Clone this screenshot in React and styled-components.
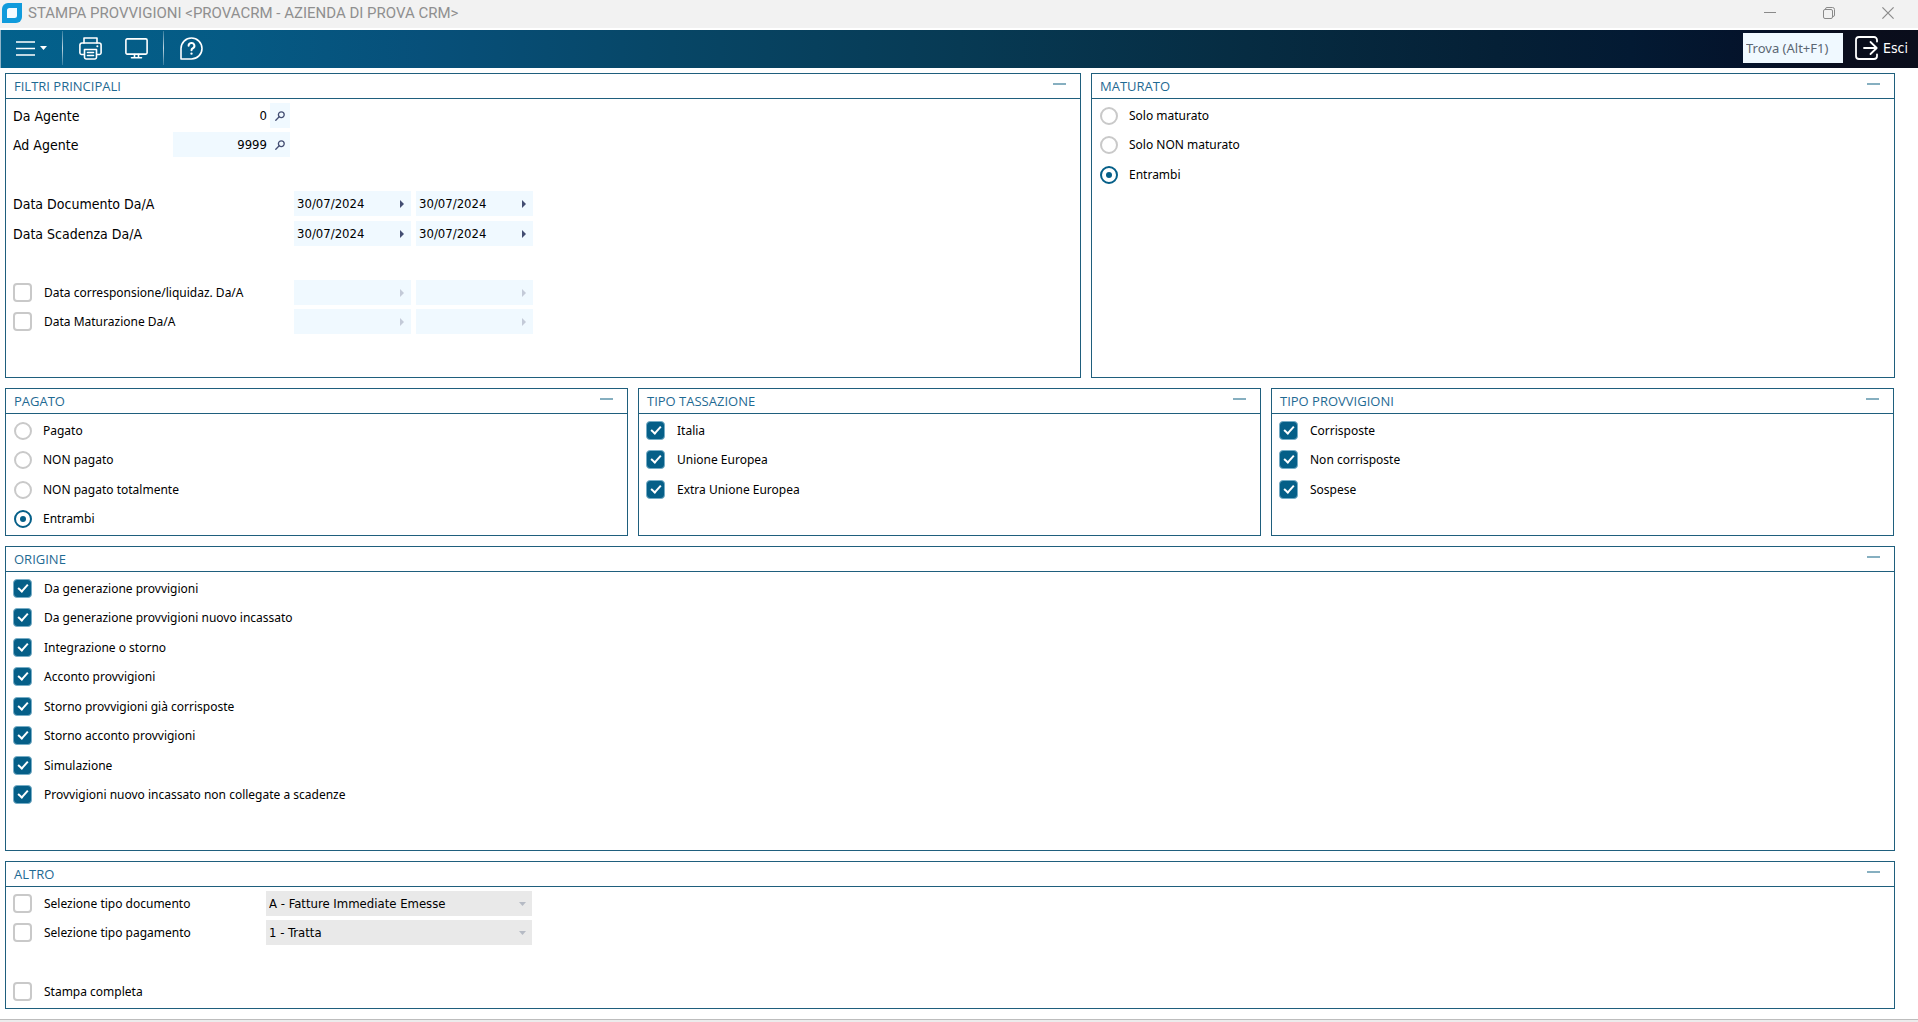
import React, { useId, useState } from 'react';
import styled, { createGlobalStyle } from 'styled-components';

const color = {
  line: '#1f5f7d',
  heading: '#1f6a93',
  accent: '#055f88',
  field: '#f0f9ff',
  glyph: '#434d72',
};

const GlobalStyle = createGlobalStyle`
  *, *::before, *::after { box-sizing: border-box; }
  body {
    margin: 0;
    background: #fff;
    color: #000;
    font: 12px/16px "Noto Sans", sans-serif;
  }
  button, input, select { font: inherit; color: inherit; margin: 0; }
`;

const Window = styled.div`
  display: flex;
  flex-direction: column;
  min-height: 100vh;
`;

/* ---------- title bar ---------- */

const TitleBar = styled.header`
  display: flex;
  align-items: center;
  gap: 6px;
  height: 28px;
  margin-bottom: 2px;
  padding: 0 12px 2px 2px;
  background: #f2f2f2;
  color: #8f8f8f;
`;

const Title = styled.h1`
  flex: 1;
  margin: 0;
  font: 400 15px/20px Roboto, sans-serif;
  white-space: nowrap;
`;

const WindowControls = styled.div`
  display: flex;
  gap: 23px;
`;

const WindowButton = styled.button`
  display: grid;
  place-items: center;
  width: 36px;
  height: 24px;
  padding: 0;
  border: 0;
  background: none;
  color: #8a8a8a;
`;

/* ---------- toolbar ---------- */

const Toolbar = styled.nav`
  display: flex;
  align-items: center;
  height: 38px;
  padding: 0 10px 2px 7px;
  border-left: 1px solid #8fb4c8;
  background: linear-gradient(
    90deg,
    #03618c 0%,
    #055a84 12%,
    #07507a 22%,
    #074666 35%,
    #073a54 50%,
    #062c42 65%,
    #052036 78%,
    #031a33 85%,
    #04132b 91%,
    #0a0e1d 96%,
    #0a0d1b 100%
  );
  color: #fff;
`;

const ToolButton = styled.button`
  display: flex;
  align-items: center;
  justify-content: center;
  gap: 5px;
  width: 46px;
  height: 34px;
  padding: 0;
  border: 0;
  background: none;
`;

const ToolGroup = styled.div`
  display: flex;
  padding: 0 4px;
`;

const Separator = styled.span`
  width: 1px;
  height: 34px;
  margin-left: ${(p) => (p.$wide ? 8 : 0)}px;
  background: linear-gradient(rgba(255, 255, 255, 0.2), rgba(255, 255, 255, 0.75), rgba(255, 255, 255, 0.2));
`;

const SearchBox = styled.input`
  width: 100px;
  height: 30px;
  margin-left: auto;
  padding: 0 3px;
  border: 0;
  border-radius: 0;
  background: ${color.field};
  font-size: 13px;
  &::placeholder { color: #5b6672; opacity: 1; }
`;

const ExitButton = styled.button`
  display: flex;
  align-items: center;
  gap: 4px;
  height: 34px;
  margin-left: 12px;
  padding: 0;
  border: 0;
  background: none;
  font: 14px/20px "DejaVu Sans Condensed", sans-serif;
`;

/* ---------- panels ---------- */

const Main = styled.main`
  display: flex;
  flex-direction: column;
  flex: 1;
  gap: 10px;
  padding: 5px 23px 10px 5px;
`;

const PanelRow = styled.div`
  display: grid;
  grid-template-columns: ${(p) => p.$columns};
  gap: 10px;
  padding-right: ${(p) => (p.$inset ? 1 : 0)}px;
`;

const PanelFrame = styled.section`
  min-height: ${(p) => (p.$tall ? 305 : 148)}px;
  border: 1px solid ${color.line};
  background: #fff;
`;

const PanelHeader = styled.div`
  display: flex;
  justify-content: space-between;
  height: 25px;
  padding: 0 12px 0 8px;
  border-bottom: 1px solid ${color.line};
`;

const PanelTitle = styled.h2`
  margin: 0;
  color: ${color.heading};
  font: 400 13px/25px "Open Sans", sans-serif;
`;

const CollapseButton = styled.button`
  display: grid;
  place-items: center;
  width: 17px;
  height: 20px;
  padding: 0;
  border: 0;
  background: none;
  &::before {
    content: "";
    width: 13px;
    height: 2px;
    background: #86afc0;
  }
`;

const PanelBody = styled.div`
  padding: 4px 7px;
`;

const Row = styled.div`
  display: flex;
  align-items: center;
  height: 25px;
  &:nth-child(odd) { margin-bottom: 4px; }
  &:nth-child(even) { margin-bottom: 5px; }
  &:last-child { margin-bottom: 0; }
`;

const LabelCell = styled.div`
  display: flex;
  flex: none;
  width: ${(p) => p.$width}px;
`;

const FieldLabel = styled.label`
  font: 14px/20px "DejaVu Sans Condensed", sans-serif;
`;

const ChoiceLabel = styled.label`
  display: flex;
  align-items: center;
  gap: ${(p) => p.$gap}px;
`;

const CheckInput = styled.input`
  appearance: none;
  display: grid;
  place-items: center;
  width: 19px;
  height: 19px;
  border: 2px solid #c9c9c9;
  border-radius: 4px;
  background: #fff;
  &:checked {
    border: 1px solid #76adc6;
    background: ${color.accent};
  }
  &:checked::before {
    content: "";
    width: 6px;
    height: 10px;
    margin-top: -3px;
    border: solid #fff;
    border-width: 0 2px 2px 0;
    transform: rotate(42deg);
  }
`;

const RadioInput = styled.input`
  appearance: none;
  display: grid;
  place-items: center;
  width: 18px;
  height: 18px;
  margin-left: 1px;
  border: 2px solid #c9c9c9;
  border-radius: 50%;
  background: #fff;
  &:checked { border-color: ${color.accent}; }
  &:checked::before {
    content: "";
    width: 6px;
    height: 6px;
    border-radius: 50%;
    background: ${color.accent};
  }
`;

const FieldBox = styled.div`
  display: flex;
  width: 117px;
  height: 25px;
  margin-right: 5px;
  background: ${color.field};
`;

const TextInput = styled.input`
  flex: 1;
  min-width: 0;
  height: 25px;
  padding: 0 3px;
  border: 0;
  border-radius: 0;
  outline: 0;
  background: ${(p) => (p.$active ? '#fff' : 'transparent')};
  font: 13px/25px "DejaVu Sans Condensed", sans-serif;
  text-align: ${(p) => p.$align};
`;

const FieldButton = styled.button`
  display: grid;
  place-items: center;
  width: 20px;
  height: 25px;
  padding: 0 0 0 ${(p) => (p.$arrow ? 2 : 0)}px;
  border: 0;
  background: none;
  color: ${color.glyph};
  &:disabled { color: #c3cad8; }
`;

const SelectBox = styled.div`
  display: grid;
  align-items: center;
  width: 266px;
  height: 25px;
  background: #e9e9e9;
  color: #b5bac4;
  > * { grid-area: 1 / 1; }
  > svg { justify-self: end; margin-right: 6px; pointer-events: none; }
`;

const SelectInput = styled.select`
  appearance: none;
  width: 100%;
  height: 25px;
  padding: 0 20px 0 3px;
  border: 0;
  border-radius: 0;
  background: transparent;
  color: #000;
  font: 13px/25px "DejaVu Sans Condensed", sans-serif;
  opacity: 1;
`;

const StatusBar = styled.footer`
  height: 3px;
  border-top: 1px solid #bdbdbd;
  background: #ececec;
`;

/* ---------- drawings ---------- */

const AppLogo = () => (
  <svg width="20" height="20" viewBox="0 0 20 20" aria-hidden="true">
    <path d="M6 0H20V14A6 6 0 0 1 14 20H0V6A6 6 0 0 1 6 0Z" fill="#109bdc" />
    <path d="M7.500 5H15V12.500A2.500 2.500 0 0 1 12.500 15H5V7.500A2.500 2.500 0 0 1 7.500 5Z" fill="#f4fbff" />
  </svg>
);

const MinimizeIcon = () => (
  <svg width="12" height="12" viewBox="0 0 12 12" fill="none" stroke="currentColor">
    <path d="M0 5.500H12" />
  </svg>
);

const RestoreIcon = () => (
  <svg width="12" height="12" viewBox="0 0 12 12" fill="none" stroke="currentColor">
    <rect x="0.500" y="2.500" width="9" height="9" rx="1.500" />
    <path d="M2.500 2.500V2A1.500 1.500 0 0 1 4 .500H9.500A2 2 0 0 1 11.500 2.500V8A1.500 1.500 0 0 1 10 9.500H9.500" />
  </svg>
);

const CloseIcon = () => (
  <svg width="12" height="12" viewBox="0 0 12 12" fill="none" stroke="currentColor" strokeWidth="1.200">
    <path d="M.400 .400L11.600 11.600M11.600 .400L.400 11.600" />
  </svg>
);

const MenuIcon = () => (
  <svg width="19" height="15" viewBox="0 0 19 15" stroke="#fff" strokeWidth="1.600">
    <path d="M0 1H19M0 7.500H19M0 14H19" />
  </svg>
);

const CaretIcon = () => (
  <svg width="7" height="4" viewBox="0 0 7 4" fill="currentColor">
    <path d="M0 0H7L3.500 4Z" />
  </svg>
);

const PrinterIcon = () => (
  <svg width="23" height="23" viewBox="0 0 23 23" fill="none" stroke="#fff" strokeWidth="1.600" strokeLinejoin="round" strokeLinecap="round">
    <path d="M5 6V1H18V6" />
    <path d="M5 17.500H2.500A1.700 1.700 0 0 1 .900 16V8A2 2 0 0 1 2.900 6H20.100A2 2 0 0 1 22.100 8V16A1.700 1.700 0 0 1 20.500 17.500H18" />
    <path d="M5.500 12.500H17.500V20.500A1.600 1.600 0 0 1 16 22H7A1.600 1.600 0 0 1 5.500 20.500Z" />
    <path d="M8.500 15.500H14.500M8.500 18.500H14.500" />
    <path d="M18.300 9.200H18.400" strokeWidth="2" />
  </svg>
);

const MonitorIcon = () => (
  <svg width="23" height="21" viewBox="0 0 23 21" fill="none" stroke="#fff" strokeWidth="1.600" strokeLinejoin="round" strokeLinecap="round">
    <rect x=".900" y=".900" width="21.200" height="15.200" rx="1.300" />
    <path d="M9.500 16.500V19.500M13.500 16.500V19.500M6.500 19.800H16.500" />
  </svg>
);

const HelpIcon = () => (
  <svg width="23" height="23" viewBox="0 0 23 23" fill="none" stroke="#fff" strokeWidth="1.600" strokeLinecap="round" strokeLinejoin="round">
    <path d="M1 22V11.500A10.500 10.500 0 1 1 11.500 22Z" />
    <path d="M8.600 8.800A2.900 2.900 0 1 1 12.600 11.500C11.800 11.900 11.500 12.300 11.500 13.300" strokeWidth="2" />
    <path d="M11.500 16.600V16.700" strokeWidth="2.300" />
  </svg>
);

const ExitIcon = () => (
  <svg width="24" height="24" viewBox="0 0 24 24" fill="none" stroke="#fff" strokeWidth="1.800" strokeLinecap="round" strokeLinejoin="round">
    <path d="M22 5.500V4A3 3 0 0 0 19 1H4A3 3 0 0 0 1 4V20A3 3 0 0 0 4 23H19A3 3 0 0 0 22 20V18.500" />
    <path d="M9 12H21.500M15.500 6L21.700 12L15.500 18" />
  </svg>
);

const LookupIcon = () => (
  <svg width="10" height="10" viewBox="0 0 10 10" fill="none" stroke="currentColor" strokeWidth="1.300" strokeLinecap="round">
    <circle cx="6.300" cy="3.700" r="2.900" />
    <path d="M4.200 5.800L.800 9.200" />
  </svg>
);

const ArrowIcon = () => (
  <svg width="4" height="8" viewBox="0 0 4 8" fill="currentColor">
    <path d="M0 0L4 4L0 8Z" />
  </svg>
);

/* ---------- composed parts ---------- */

function Panel({ title, tall, children }) {
  return (
    <PanelFrame $tall={tall}>
      <PanelHeader>
        <PanelTitle>{title}</PanelTitle>
        <CollapseButton type="button" aria-label={`Riduci ${title}`} />
      </PanelHeader>
      <PanelBody>{children}</PanelBody>
    </PanelFrame>
  );
}

function Check({ label, checked = false }) {
  return (
    <ChoiceLabel $gap={12}>
      <CheckInput type="checkbox" defaultChecked={checked} />
      {label}
    </ChoiceLabel>
  );
}

function CheckList({ items }) {
  return items.map((label) => (
    <Row key={label}>
      <Check label={label} checked />
    </Row>
  ));
}

function RadioList({ name, items, initial }) {
  const [value, setValue] = useState(initial);
  return items.map((label) => (
    <Row key={label}>
      <ChoiceLabel $gap={11}>
        <RadioInput type="radio" name={name} checked={value === label} onChange={() => setValue(label)} />
        {label}
      </ChoiceLabel>
    </Row>
  ));
}

function AgentRow({ label, value, active }) {
  const id = useId();
  return (
    <Row>
      <LabelCell $width={160}>
        <FieldLabel htmlFor={id}>{label}</FieldLabel>
      </LabelCell>
      <FieldBox>
        <TextInput id={id} defaultValue={value} $align="right" $active={active} />
        <FieldButton type="button" aria-label={`Cerca ${label}`}>
          <LookupIcon />
        </FieldButton>
      </FieldBox>
    </Row>
  );
}

function DateField({ id, label, value, disabled }) {
  return (
    <FieldBox>
      <TextInput id={id} aria-label={label} defaultValue={value} disabled={disabled} $align="left" />
      <FieldButton type="button" aria-label={`Calendario ${label}`} disabled={disabled} $arrow>
        <ArrowIcon />
      </FieldButton>
    </FieldBox>
  );
}

function DateRow({ label, value = '', optional }) {
  const id = useId();
  return (
    <Row>
      <LabelCell $width={281}>
        {optional ? <Check label={label} /> : <FieldLabel htmlFor={id}>{label}</FieldLabel>}
      </LabelCell>
      <DateField id={id} label={`${label} inizio`} value={value} disabled={optional} />
      <DateField label={`${label} fine`} value={value} disabled={optional} />
    </Row>
  );
}

function SelectRow({ label, option }) {
  return (
    <Row>
      <LabelCell $width={253}>
        <Check label={label} />
      </LabelCell>
      <SelectBox>
        <SelectInput aria-label={label} disabled>
          <option>{option}</option>
        </SelectInput>
        <CaretIcon />
      </SelectBox>
    </Row>
  );
}

export default function App() {
  return (
    <>
      <GlobalStyle />
      <Window>
        <TitleBar>
          <AppLogo />
          <Title>{'STAMPA PROVVIGIONI <PROVACRM - AZIENDA DI PROVA CRM>'}</Title>
          <WindowControls>
            <WindowButton type="button" aria-label="Riduci a icona"><MinimizeIcon /></WindowButton>
            <WindowButton type="button" aria-label="Ripristina"><RestoreIcon /></WindowButton>
            <WindowButton type="button" aria-label="Chiudi"><CloseIcon /></WindowButton>
          </WindowControls>
        </TitleBar>

        <Toolbar>
          <ToolButton type="button" aria-label="Menu"><MenuIcon /><CaretIcon /></ToolButton>
          <Separator $wide />
          <ToolGroup>
            <ToolButton type="button" aria-label="Stampa"><PrinterIcon /></ToolButton>
            <ToolButton type="button" aria-label="Anteprima"><MonitorIcon /></ToolButton>
          </ToolGroup>
          <Separator />
          <ToolGroup>
            <ToolButton type="button" aria-label="Aiuto"><HelpIcon /></ToolButton>
          </ToolGroup>
          <SearchBox type="text" aria-label="Trova" placeholder="Trova (Alt+F1)" />
          <ExitButton type="button"><ExitIcon />Esci</ExitButton>
        </Toolbar>

        <Main>
          <PanelRow $columns="1076fr 804fr">
            <Panel title="FILTRI PRINCIPALI" tall>
              <AgentRow label="Da Agente" value="0" active />
              <AgentRow label="Ad Agente" value="9999" />
              <Row />
              <DateRow label="Data Documento Da/A" value="30/07/2024" />
              <DateRow label="Data Scadenza Da/A" value="30/07/2024" />
              <Row />
              <DateRow label="Data corresponsione/liquidaz. Da/A" optional />
              <DateRow label="Data Maturazione Da/A" optional />
            </Panel>
            <Panel title="MATURATO" tall>
              <RadioList name="maturato" initial="Entrambi" items={['Solo maturato', 'Solo NON maturato', 'Entrambi']} />
            </Panel>
          </PanelRow>

          <PanelRow $columns="repeat(3, 1fr)" $inset>
            <Panel title="PAGATO">
              <RadioList name="pagato" initial="Entrambi" items={['Pagato', 'NON pagato', 'NON pagato totalmente', 'Entrambi']} />
            </Panel>
            <Panel title="TIPO TASSAZIONE">
              <CheckList items={['Italia', 'Unione Europea', 'Extra Unione Europea']} />
            </Panel>
            <Panel title="TIPO PROVVIGIONI">
              <CheckList items={['Corrisposte', 'Non corrisposte', 'Sospese']} />
            </Panel>
          </PanelRow>

          <Panel title="ORIGINE" tall>
            <CheckList
              items={[
                'Da generazione provvigioni',
                'Da generazione provvigioni nuovo incassato',
                'Integrazione o storno',
                'Acconto provvigioni',
                'Storno provvigioni già corrisposte',
                'Storno acconto provvigioni',
                'Simulazione',
                'Provvigioni nuovo incassato non collegate a scadenze',
              ]}
            />
          </Panel>

          <Panel title="ALTRO">
            <SelectRow label="Selezione tipo documento" option="A - Fatture Immediate Emesse" />
            <SelectRow label="Selezione tipo pagamento" option="1 - Tratta" />
            <Row />
            <Row>
              <Check label="Stampa completa" />
            </Row>
          </Panel>
        </Main>
        <StatusBar />
      </Window>
    </>
  );
}
